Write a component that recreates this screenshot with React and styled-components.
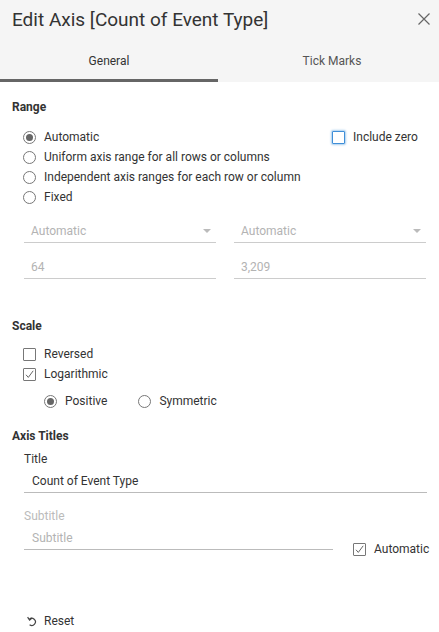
import styled, { createGlobalStyle } from "styled-components";

const GlobalStyle = createGlobalStyle`
  html, body {
    margin: 0;
    padding: 0;
    background: #fff;
  }
  body {
    font-family: Roboto, "Liberation Sans", Arial, sans-serif;
    font-size: 12px;
    color: #333;
  }
`;

const Dialog = styled.div`
  width: 439px;
  height: 632px;
  background: #fff;
  display: flex;
  flex-direction: column;
`;

const Header = styled.div`
  background: #f5f5f5;
  height: 82px;
  flex-shrink: 0;
  display: flex;
  flex-direction: column;
`;

const TitleBar = styled.div`
  height: 38px;
  display: flex;
  align-items: center;
  justify-content: space-between;
  padding: 0 7px 0 12px;
  box-sizing: border-box;
`;

const Title = styled.h1`
  margin: 0;
  font-size: 19px;
  font-weight: 400;
  color: #333;
`;

const CloseButton = styled.button`
  border: 0;
  background: none;
  padding: 0;
  width: 16px;
  height: 16px;
  display: flex;
  align-items: center;
  justify-content: center;
  cursor: pointer;
`;

const Tabs = styled.div`
  flex: 1;
  display: flex;
`;

const Tab = styled.div`
  width: ${(p) => (p.$wide ? "221px" : "218px")};
  display: flex;
  align-items: center;
  justify-content: center;
  padding: 4px 0 0 ${(p) => (p.$wide ? "7px" : "0")};
  box-sizing: border-box;
  color: ${(p) => (p.$active ? "#333" : "#555")};
  border-bottom: 3px solid ${(p) => (p.$active ? "#666" : "transparent")};
`;

const Body = styled.div`
  flex: 1;
  padding: 18px 12px 0;
  display: flex;
  flex-direction: column;
`;

const SectionLabel = styled.div`
  font-weight: 700;
  line-height: 14px;
  margin-top: ${(p) => p.$top || 0}px;
`;

const RangeTop = styled.div`
  display: flex;
  margin-top: 13px;
`;

const OptionList = styled.div`
  flex: ${(p) => (p.$grow ? 1 : "none")};
  display: flex;
  flex-direction: column;
  padding-left: 11px;
  margin-top: ${(p) => p.$top || 0}px;
`;

const Row = styled.label`
  height: 20px;
  display: flex;
  align-items: center;
  gap: 8px;
  color: ${(p) => (p.$muted ? "#aaa" : "#333")};
`;

const InlineRow = styled.div`
  display: flex;
  gap: 31px;
  padding-left: 32px;
  margin-top: 7px;
`;

const Radio = styled.span`
  width: 13px;
  height: 13px;
  box-sizing: border-box;
  border-radius: 50%;
  border: 1px solid #777;
  display: flex;
  align-items: center;
  justify-content: center;
  background: #fff;
  flex-shrink: 0;
  &::after {
    content: "";
    width: 7px;
    height: 7px;
    border-radius: 50%;
    background: ${(p) => (p.$checked ? "#666" : "transparent")};
  }
`;

const Box = styled.span`
  width: 13px;
  height: 13px;
  box-sizing: border-box;
  border: 1px solid ${(p) => (p.$focus ? "#3f8fd8" : "#777")};
  border-radius: 1px;
  box-shadow: ${(p) => (p.$focus ? "0 0 2px 1px rgba(63,143,216,0.45)" : "none")};
  display: flex;
  align-items: center;
  justify-content: center;
  flex-shrink: 0;
  background: #fff;
`;

const SideColumn = styled.div`
  width: 95px;
  display: flex;
  flex-direction: column;
`;

const FieldGrid = styled.div`
  display: grid;
  grid-template-columns: 192px 192px;
  column-gap: 18px;
  row-gap: 12px;
  padding-left: 12px;
  margin-top: 12px;
`;

const Field = styled.div`
  height: 24px;
  flex-shrink: 0;
  box-sizing: border-box;
  border-bottom: 1px solid ${(p) => (p.$dark ? "#bbb" : "#ccc")};
  display: flex;
  align-items: center;
  justify-content: space-between;
  padding: 0 ${(p) => (p.$arrow ? "5px" : "0")} 0 ${(p) => p.$pad || 7}px;
  color: ${(p) => (p.$muted ? "#b3b3b3" : "#333")};
  width: ${(p) => p.$width || "auto"};
`;

const Arrow = styled.span`
  width: 0;
  height: 0;
  border-left: 4px solid transparent;
  border-right: 4px solid transparent;
  border-top: 4px solid #bbb;
`;

const FieldLabel = styled.div`
  line-height: 14px;
  padding-left: 12px;
  margin-top: ${(p) => p.$top}px;
  color: ${(p) => (p.$muted ? "#bbb" : "#333")};
`;

const TitleField = styled.div`
  margin: 3px 0 0 12px;
`;

const SubtitleRow = styled.div`
  display: flex;
  align-items: flex-end;
  gap: 20px;
  margin: 3px 0 0 12px;
`;

const AutoCheck = styled(Row)`
  height: 14px;
  margin-bottom: -6px;
`;

const Footer = styled.div`
  flex-shrink: 0;
  height: 22px;
  display: flex;
  align-items: center;
  padding-left: 27px;
`;

const ResetButton = styled.button`
  border: 0;
  background: none;
  padding: 0;
  font: inherit;
  color: #333;
  display: flex;
  align-items: center;
  gap: 7px;
  cursor: pointer;
`;

const Check = () => (
  <svg width="9" height="9" viewBox="0 0 9 9">
    <path d="M1 4.8 L3.3 7.4 L8.2 0.8" fill="none" stroke="#666" strokeWidth="1" />
  </svg>
);

const RadioRow = ({ checked, children }) => (
  <Row>
    <Radio $checked={checked} />
    {children}
  </Row>
);

const CheckRow = ({ checked, focus, children }) => (
  <Row>
    <Box $focus={focus}>{checked && <Check />}</Box>
    {children}
  </Row>
);

export default function App() {
  return (
    <>
      <GlobalStyle />
      <Dialog>
        <Header>
          <TitleBar>
            <Title>Edit Axis [Count of Event Type]</Title>
            <CloseButton aria-label="Close">
              <svg width="12" height="12" viewBox="0 0 12 12">
                <path d="M0.5 0.5 L11.5 11.5 M11.5 0.5 L0.5 11.5" stroke="#666" strokeWidth="1.2" />
              </svg>
            </CloseButton>
          </TitleBar>
          <Tabs>
            <Tab $active>General</Tab>
            <Tab $wide>Tick Marks</Tab>
          </Tabs>
        </Header>
        <Body>
          <SectionLabel>Range</SectionLabel>
          <RangeTop>
            <OptionList $grow>
              <RadioRow checked>Automatic</RadioRow>
              <RadioRow>Uniform axis range for all rows or columns</RadioRow>
              <RadioRow>Independent axis ranges for each row or column</RadioRow>
              <RadioRow>Fixed</RadioRow>
            </OptionList>
            <SideColumn>
              <CheckRow focus>Include zero</CheckRow>
            </SideColumn>
          </RangeTop>
          <FieldGrid>
            <Field $muted $arrow>
              Automatic
              <Arrow />
            </Field>
            <Field $muted $arrow>
              Automatic
              <Arrow />
            </Field>
            <Field $muted>64</Field>
            <Field $muted>3,209</Field>
          </FieldGrid>

          <SectionLabel $top={40}>Scale</SectionLabel>
          <OptionList $top={11}>
            <CheckRow>Reversed</CheckRow>
            <CheckRow checked>Logarithmic</CheckRow>
          </OptionList>
          <InlineRow>
            <RadioRow checked>Positive</RadioRow>
            <RadioRow>Symmetric</RadioRow>
          </InlineRow>

          <SectionLabel $top={18}>Axis Titles</SectionLabel>
          <FieldLabel $top={9}>Title</FieldLabel>
          <TitleField>
            <Field $dark $pad={8}>Count of Event Type</Field>
          </TitleField>
          <FieldLabel $top={16} $muted>
            Subtitle
          </FieldLabel>
          <SubtitleRow>
            <Field $dark $muted $pad={8} $width="309px">
              Subtitle
            </Field>
            <AutoCheck>
              <Box>
                <Check />
              </Box>
              Automatic
            </AutoCheck>
          </SubtitleRow>
        </Body>
        <Footer>
          <ResetButton>
            <svg width="10" height="11" viewBox="0 0 10 11">
              <path d="M2.2 3.4 A3.6 3.6 0 1 1 2.6 8.8" fill="none" stroke="#444" strokeWidth="1.2" />
              <path d="M0.6 1.2 L2.6 4.2 L5 2" fill="none" stroke="#444" strokeWidth="1.2" />
            </svg>
            Reset
          </ResetButton>
        </Footer>
      </Dialog>
    </>
  );
}
